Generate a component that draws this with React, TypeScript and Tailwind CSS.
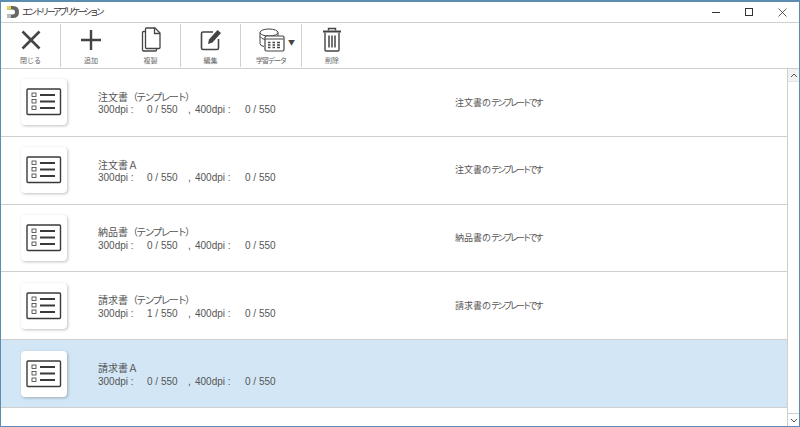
import { ReactNode } from "react";

function CloseIcon() {
  return (
    <svg width="24" height="24" viewBox="0 0 24 24" className="text-[#444]">
      <path d="M3.500 3.500 20.500 20.500M20.500 3.500 3.500 20.500" stroke="currentColor" strokeWidth="2.600" fill="none" />
    </svg>
  );
}

function AddIcon() {
  return (
    <svg width="24" height="24" viewBox="0 0 24 24" className="text-[#444]">
      <path d="M12 2V22M2 12H22" stroke="currentColor" strokeWidth="2.400" fill="none" />
    </svg>
  );
}

function CopyIcon() {
  return (
    <svg width="22" height="26" viewBox="0 0 22 26" fill="none" stroke="#444" strokeWidth="1.300">
      <path d="M6.500 1H15L20 6V20.500Q20 21.500 19 21.500H6.500Q5.500 21.500 5.500 20.500V2Q5.500 1 6.500 1Z" />
      <path d="M14.500 1V6.500H20" />
      <path d="M5.500 4.500H3.500Q2.500 4.500 2.500 5.500V23Q2.500 24 3.500 24H15.500Q16.500 24 16.500 23V21.500" />
    </svg>
  );
}

function EditIcon() {
  return (
    <svg width="24" height="24" viewBox="0 0 24 24" fill="none">
      <path d="M14 4H4Q2.500 4 2.500 5.500V20Q2.500 21.500 4 21.500H18Q19.500 21.500 19.500 20V11" stroke="#444" strokeWidth="1.600" />
      <path d="M10 11.500 18.500 2 22 5 13.500 14.500 9 16Z" fill="#444" />
    </svg>
  );
}

function DataIcon() {
  return (
    <svg width="26" height="24" viewBox="0 0 26 24" fill="none" stroke="#444" strokeWidth="1">
      <ellipse cx="10" cy="4.500" rx="9" ry="3.500" />
      <path d="M1 4.500V15.500Q1 18 5 18.500" />
      <path d="M19 4.500V8" />
      <path d="M1 8.500Q2.500 11 6 11.500" />
      <rect x="6" y="8" width="19" height="15" rx="1.500" fill="#fff" strokeWidth="1.200" />
      <path d="M6.500 11H24.500" />
      <path d="M9 14.500H11.500M13.500 14.500H16M18 14.500H21M9 17H11.500M13.500 17H16M18 17H21M9 19.500H11.500M13.500 19.500H16M18 19.500H21" strokeWidth="1.400" />
    </svg>
  );
}

function TrashIcon() {
  return (
    <svg width="20" height="25" viewBox="0 0 20 25" fill="none" stroke="#444" strokeWidth="1.400">
      <path d="M1 4.500H19" strokeWidth="2" />
      <path d="M6.500 3.500V1.500H13.500V3.500" />
      <path d="M3 5.500V23Q3 24 4 24H16Q17 24 17 23V5.500" />
      <path d="M7 8.500V20.500M10 8.500V20.500M13 8.500V20.500" strokeWidth="1.500" />
    </svg>
  );
}

function ListIcon() {
  return (
    <svg width="36" height="28" viewBox="0 0 36 28" fill="none" stroke="#3a3a3a">
      <rect x="1" y="1" width="33.500" height="25.500" rx="1" strokeWidth="1.400" />
      <path d="M14 7H29M14 13.500H29M14 20H29" strokeWidth="1.800" />
      <rect x="6" y="5" width="4" height="3.500" strokeWidth="0.800" />
      <rect x="6" y="11.500" width="4" height="3.500" strokeWidth="0.800" />
      <rect x="6" y="18" width="4" height="3.500" strokeWidth="0.800" />
    </svg>
  );
}

function ToolButton({ label, width, icon, divider }: { label: string; width: string; icon: ReactNode; divider?: boolean }) {
  return (
    <div className={`flex h-[43px] flex-col items-center ${width} ${divider ? "border-r border-[#d0d0d0]" : ""}`}>
      <div className="flex h-[31px] items-center justify-center">{icon}</div>
      <span className="text-[7px] leading-[10px] text-[#666]">{label}</span>
    </div>
  );
}

const rows = [
  { head: "注文書", tail: "（テンプレート）", a: 0, note: "注文書" },
  { head: "注文書Ａ", tail: "", a: 0, note: "注文書" },
  { head: "納品書", tail: "（テンプレート）", a: 0, note: "納品書" },
  { head: "請求書", tail: "（テンプレート）", a: 1, note: "請求書" },
  { head: "請求書Ａ", tail: "", a: 0, note: "", selected: true },
];

export default function App() {
  return (
    <div className="flex h-[427px] w-[800px] flex-col overflow-hidden border border-t-2 border-[#5b8db0] bg-white font-['Noto_Sans_CJK_JP','Noto_Sans',sans-serif]">
      <div className="flex h-[21px] shrink-0 items-center border-b border-[#cfcfcf]">
        <svg width="14" height="14" viewBox="0 0 14 14" className="ml-[5px]">
          <path d="M1 1H7Q13 1 13 7T7 13H1V9.500H6.500Q9 9.500 9 7T6.500 4.500H1Z" fill="#666" />
          <rect x="1" y="1" width="4" height="3.500" fill="#e8d44d" />
          <rect x="1" y="9.500" width="4" height="3.500" fill="#bbb" />
        </svg>
        <span className="ml-[2px] text-[9px] tracking-[-2.800px] text-[#333]">エントリーアプリケーション</span>
        <div className="ml-auto flex items-center gap-[25px] pr-[12px]">
          <div className="h-px w-[8px] bg-[#333]" />
          <div className="h-[8px] w-[8px] border border-[#333]" />
          <svg width="9" height="9" viewBox="0 0 9 9" stroke="#333" strokeWidth="0.800">
            <path d="M0.500 0.500 8.500 8.500M8.500 0.500 0.500 8.500" />
          </svg>
        </div>
      </div>

      <div className="flex h-[46px] shrink-0 items-start border-b border-[#cfcfcf] pt-[1px]">
        <ToolButton label="閉じる" width="w-[60px]" icon={<CloseIcon />} divider />
        <ToolButton label="追加" width="w-[60px]" icon={<AddIcon />} />
        <ToolButton label="複製" width="w-[60px]" icon={<CopyIcon />} divider />
        <ToolButton label="編集" width="w-[60px]" icon={<EditIcon />} divider />
        <div className="flex h-[43px] w-[61px] flex-col items-center border-r border-[#d0d0d0]">
          <div className="flex h-[31px] items-center pl-[12px]">
            <DataIcon />
            <span className="ml-[3px] mt-[6px] text-[7px] text-[#444]">▼</span>
          </div>
          <span className="text-[7px] leading-[10px] tracking-[-1px] text-[#666]">学習データ</span>
        </div>
        <ToolButton label="削除" width="w-[60px]" icon={<TrashIcon />} />
      </div>

      <div className="flex flex-1">
        <div className="flex-1">
          {rows.map((row) => (
            <div
              key={row.head}
              className={`flex h-[67.8px] items-center border-b border-[#cfcfcf] ${row.selected ? "bg-[#d2e6f5]" : "bg-white"}`}
            >
              <div className="ml-[20px] flex h-[46px] w-[46px] shrink-0 items-center justify-center rounded-[4px] bg-white shadow-[1px_1px_3px_rgba(0,0,0,0.25)]">
                <ListIcon />
              </div>
              <div className="ml-[31px] w-[357px] shrink-0 pt-[1px] text-[#555]">
                <div className="text-[10px] leading-[14.500px]">
                  {row.head}
                  <span className="tracking-[-1.800px]">{row.tail}</span>
                </div>
                <div className="flex font-['Liberation_Sans',sans-serif] text-[10px] leading-[11.500px] whitespace-pre">
                  <span className="w-[49px]">300dpi :</span>
                  <span className="w-[41px]">{row.a} / 550</span>
                  <span className="w-[7px]">,</span>
                  <span className="w-[50px]">400dpi :</span>
                  <span>0 / 550</span>
                </div>
              </div>
              {row.note && (
                <div className="text-[9px] text-[#555]">
                  {row.note}の<span className="tracking-[-2.700px]">テンプレートです</span>
                </div>
              )}
            </div>
          ))}
        </div>
        <div className="flex w-[12px] flex-col justify-between border-l border-[#cfcfcf]">
          <div className="flex h-[13px] items-center justify-center border-b border-[#e4e4e4] bg-[#f2f2f2]">
            <svg width="8" height="5" viewBox="0 0 8 5" fill="none" stroke="#555">
              <path d="M1 4 4 1 7 4" />
            </svg>
          </div>
          <div className="flex h-[13px] items-center justify-center border-t border-[#cfcfcf]">
            <svg width="8" height="5" viewBox="0 0 8 5" fill="none" stroke="#555">
              <path d="M1 1 4 4 7 1" />
            </svg>
          </div>
        </div>
      </div>
    </div>
  );
}
